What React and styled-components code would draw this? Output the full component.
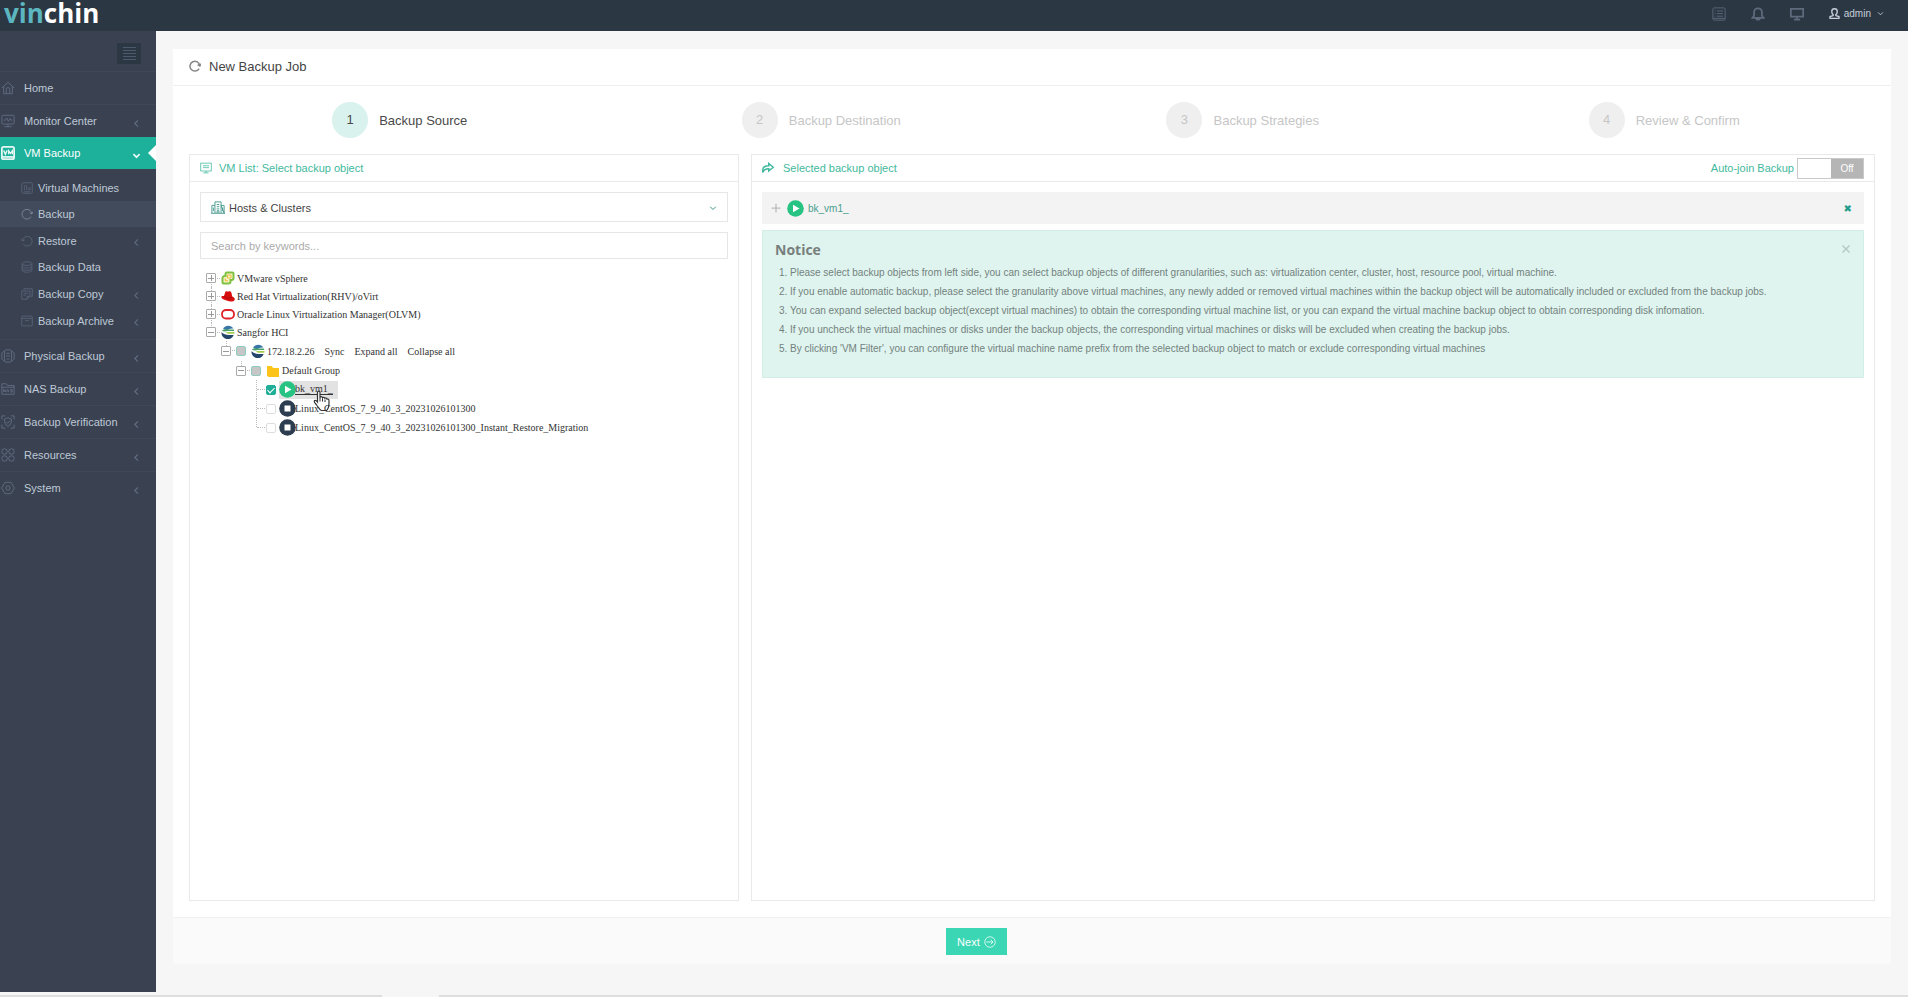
import React, { useState } from 'react';
import styled, { createGlobalStyle } from 'styled-components';

const icons = {
  home: <path d='M1 8 8 1.5 15 8M3 6.5V14.5H13V6.5M6 14V9.5a2 2 0 0 1 4 0V14' />,
  monitor: (
    <>
      <rect x='1' y='1.5' width='14' height='10' rx='1.5' />
      <path d='M3 7h2l1.5-2.5L8.500 8.500 10.500 5 11.500 7H13M8 11.500V14.500M4 14.500h8' />
    </>
  ),
  vm: (
    <>
      <rect x='1' y='1' width='14' height='14' rx='2' />
      <path d='M1 12.500h14' />
      <path d='M3 5 5 9.500 7 5M8.700 9.500V5.500L10.800 8.500 13 5.500V9.500' strokeWidth='1.500' />
    </>
  ),
  machines: (
    <>
      <rect x='1' y='1' width='14' height='14' rx='1' />
      <path d='M4.500 4v7M7.500 4v7M10.500 7v4M12 7v4M4 13h8' />
    </>
  ),
  refresh: <path d='M13.500 11.500A6.500 6.500 0 1 1 14.300 7.500M11.500 6.500l3 1.500 1.200-3' />,
  restore: <path d='M3 12A6.500 6.500 0 1 0 2 7M.5 5l1.500 3 3-1.500' />,
  data: (
    <>
      <ellipse cx='8' cy='3.500' rx='6.500' ry='2.500' />
      <path d='M1.500 3.500v3.500c0 3.300 13 3.300 13 0V3.500M1.500 7v3c0 3.300 13 3.300 13 0V7M1.500 10v2.500c0 3.300 13 3.300 13 0V10' />
    </>
  ),
  copy: (
    <>
      <path d='M4 3V1h11v10h-2' />
      <path d='M1 4h11v7l-4 4H1zM8 15v-4h4M3.500 7h6M3.500 9.500h3' />
    </>
  ),
  archive: (
    <>
      <rect x='1' y='1.500' width='14' height='13' rx='1' />
      <path d='M1 4.500h14M5.500 7.500h5' />
    </>
  ),
  physical: (
    <>
      <rect x='4' y='1' width='8' height='14' rx='1.500' />
      <path d='M4 3H2.500L1 4.500v7L2.500 13H4M12 3h1.500L15 4.500v7L13.500 13H12M6 5h4M6 8h4M6.500 11.500h3' />
    </>
  ),
  nas: (
    <>
      <path d='M1 14V2h5l1.500 2H15v10zM1 6h14' />
      <path d='M3 11.500V8.500l2 3v-3M6.500 11.500 7.800 8.500 9 11.500M13 8.500h-2v1.500h2v1.500h-2' />
    </>
  ),
  verify: (
    <>
      <path d='M8 3c1.500 1 2.500 1.500 4 1.500 0 4-.5 6.500-4 8.500-3.500-2-4-4.500-4-8.500C5.500 4.500 6.500 4 8 3zM6 8l1.500 1.500L10.500 6.500' />
      <path d='M1 5V1h4M11 1h4v4M15 11v4h-4M5 15H1v-4' />
    </>
  ),
  resources: (
    <>
      <rect x='1' y='1' width='6' height='6' rx='2.500' />
      <rect x='9' y='1' width='6' height='6' rx='2.500' />
      <rect x='1' y='9' width='6' height='6' rx='2.500' />
      <rect x='9' y='9' width='6' height='6' rx='2.500' />
    </>
  ),
  system: (
    <>
      <path d='M4.500 1.500h7L15.300 8l-3.800 6.500h-7L.7 8z' />
      <circle cx='8' cy='8' r='2.500' />
    </>
  ),
  left: <path d='M10.500 2.500 5 8l5.500 5.500' />,
  down: <path d='M2.500 5.500 8 11l5.500-5.500' />,
  list: (
    <>
      <rect x='1' y='1' width='14' height='14' rx='1.500' />
      <path d='M5.500 4.500h7M5.500 7.500h7M5.500 10.500h7M3 4.500h1M3 7.500h1M3 10.500h1M1 13h14' />
    </>
  ),
  bell: <path d='M1.500 12.500h13L12.500 10V6a4.500 4.500 0 0 0-9 0v4zM6 12.500a2 2 0 0 0 4 0' />,
  screen: <path d='M1 2h14v9H1zM8 11v3.500M4.500 14.500h7' />,
  user: <path d='M8 1c2.500 0 4 1.500 4 4 0 2-.8 3.500-2 4.500v1.500l4.500 1.500V15h-13v-2.500L6 11V9.500C4.800 8.500 4 7 4 5c0-2.500 1.500-4 4-4z' />,
  vmlist: (
    <>
      <rect x='1' y='1.500' width='14' height='10.500' />
      <path d='M4 5h8M4 7.500h8M8 12v2.500M4.500 14.500h7' />
    </>
  ),
  buildings: (
    <>
      <path d='M4.500 14V1h7v13M1 14V5h3.500M11.500 5H15v9zM0 14h16' />
      <path d='M6.500 4h3M6.500 6.500h3M6.500 9h3M7 14v-3h2v3M2.700 7.500v4M13.300 7.500v4' />
    </>
  ),
  share: <path d='M1 14V11c0-4 3-6 8-6V2l6 5-6 5V9C5 9 2.500 10 1 14z' />,
  plus: <path d='M8 1v14M1 8h14' />,
  arrow: (
    <>
      <circle cx='8' cy='8' r='7' />
      <path d='M3 8h9M9 5l3 3-3 3' />
    </>
  ),
};

const Icon = ({ name, size = 14, weight = 1 }) => (
  <Svg
    width={size}
    height={size}
    viewBox='0 0 16 16'
    fill='none'
    stroke='currentColor'
    strokeWidth={weight}
    aria-hidden='true'
  >
    {icons[name]}
  </Svg>
);

const VmwareIcon = () => (
  <Svg width='14' height='14' viewBox='0 0 14 14' aria-hidden='true'>
    <path
      d='M6 1.500h5.500a1 1 0 0 1 1 1V7a2 2 0 0 1-2 2H9.500v1.500a2 2 0 0 1-2 2H2.500a1 1 0 0 1-1-1V7a2 2 0 0 1 2-2H4.500V3a1.500 1.500 0 0 1 1.500-1.500z'
      fill='#fbf3c4'
      stroke='#7cc242'
      strokeWidth='2'
    />
    <path d='M6.500 4h3.500v3H6.500zM4.200 7.200v2.600h2.800' fill='none' stroke='#e3b93c' />
  </Svg>
);

const RedHatIcon = () => (
  <Svg width='14' height='14' viewBox='0 0 14 14' aria-hidden='true'>
    <path
      d='M3 7 4.500 2.500C5.500 1.500 6.500 3 7.500 2.500c1.500-.5 2.700.3 3 1.500l.7 3.500c2 .7 3.200 2.300 2.300 3.800-1.200 1.800-5 1.500-8 .3C2.500 10.500.3 9.500.3 8 .3 7.200 1.500 6.800 3 7z'
      fill='#d80d0d'
    />
    <path d='M3 7.200c1.500 1.800 6 2.800 8.200 1' fill='none' stroke='#a80a0a' strokeWidth='1' />
  </Svg>
);

const OracleIcon = () => (
  <Svg width='14' height='14' viewBox='0 0 14 14' aria-hidden='true'>
    <rect x='1' y='3' width='12' height='8.500' rx='4' fill='#fff' stroke='#e0222c' strokeWidth='1.800' />
  </Svg>
);

const SangforIcon = () => (
  <Svg width='14' height='14' viewBox='0 0 14 14' aria-hidden='true'>
    <path d='M2 3.500a6.300 6.300 0 0 1 10.500 0C9 3 7 4.500 6 5.500z' fill='#3a76a8' />
    <path d='M.8 5.500C3 3.800 5 4.200 7 4.500h5.800L13.300 6H6.500c-2 .8-4 .5-5.700-.5z' fill='#48a06d' />
    <path d='M5 7h8.500l-.2 1.800H8C6.500 8.800 5.500 8 5 7z' fill='#a4cf4b' />
    <path d='M.5 7.200C2.500 9 5 10 7.500 10h5.200A6.300 6.300 0 0 1 .5 7.200z' fill='#26456d' />
  </Svg>
);

const FolderIcon = () => (
  <Svg width='14' height='14' viewBox='0 0 14 14' aria-hidden='true'>
    <path d='M1 2h4.500L7.300 4H13v9H2.500L1 11.500z' fill='#fcc419' />
  </Svg>
);

const PlayIcon = () => (
  <Svg width='17' height='17' viewBox='0 0 17 17' aria-hidden='true'>
    <circle cx='8.500' cy='8.500' r='8.300' fill='#27c383' />
    <path d='M6 4.800v7.400l6.500-3.700z' fill='#fff' />
  </Svg>
);

const StopIcon = () => (
  <Svg width='17' height='17' viewBox='0 0 17 17' aria-hidden='true'>
    <circle cx='8.500' cy='8.500' r='8.300' fill='#2b3d4f' />
    <rect x='5.500' y='5.500' width='6' height='6' fill='#fff' />
  </Svg>
);

const HandCursor = () => (
  <Hand width='17' height='22' viewBox='0 0 17 22' aria-hidden='true'>
    <path
      d='M5 1.500c.8-.7 2-.2 2 1V8l.3-1c1-.7 2-.2 2.200.8.800-.8 2-.5 2.400.5.800-.6 2-.2 2.200.8.900-.3 1.900.3 1.900 1.500 0 2.500.2 5-.8 7.400-.4 1-.7 2-1.700 2.500H8.500C6.500 20 5.500 17.500 4 15.500 3 14 1 12.500 1.200 11.200c.5-1.200 2-.8 2.800.2l.5.6V2.500c0-.4.200-.8.500-1z'
      fill='#fff'
      stroke='#333'
      strokeWidth='1.200'
    />
    <path d='M7 8v3.500M9.500 8.500v3M12 9.500v2.500' stroke='#333' fill='none' />
  </Hand>
);

const menuTop = [
  { label: 'Home', icon: 'home' },
  { label: 'Monitor Center', icon: 'monitor', more: true },
];

const menuSub = [
  { label: 'Virtual Machines', icon: 'machines' },
  { label: 'Backup', icon: 'refresh', current: true },
  { label: 'Restore', icon: 'restore', more: true },
  { label: 'Backup Data', icon: 'data' },
  { label: 'Backup Copy', icon: 'copy', more: true },
  { label: 'Backup Archive', icon: 'archive', more: true },
];

const menuBottom = [
  { label: 'Physical Backup', icon: 'physical', more: true },
  { label: 'NAS Backup', icon: 'nas', more: true },
  { label: 'Backup Verification', icon: 'verify', more: true },
  { label: 'Resources', icon: 'resources', more: true },
  { label: 'System', icon: 'system', more: true },
];

const steps = ['Backup Source', 'Backup Destination', 'Backup Strategies', 'Review & Confirm'];

const platforms = [
  { label: 'VMware vSphere', icon: <VmwareIcon /> },
  { label: 'Red Hat Virtualization(RHV)/oVirt', icon: <RedHatIcon /> },
  { label: 'Oracle Linux Virtualization Manager(OLVM)', icon: <OracleIcon /> },
];

const stoppedVms = [
  'Linux_CentOS_7_9_40_3_20231026101300',
  'Linux_CentOS_7_9_40_3_20231026101300_Instant_Restore_Migration',
];

const notices = [
  'Please select backup objects from left side, you can select backup objects of different granularities, such as: virtualization center, cluster, host, resource pool, virtual machine.',
  'If you enable automatic backup, please select the granularity above virtual machines, any newly added or removed virtual machines within the backup object will be automatically included or excluded from the backup jobs.',
  'You can expand selected backup object(except virtual machines) to obtain the corresponding virtual machine list, or you can expand the virtual machine backup object to obtain corresponding disk infomation.',
  'If you uncheck the virtual machines or disks under the backup objects, the corresponding virtual machines or disks will be excluded when creating the backup jobs.',
  "By clicking 'VM Filter', you can configure the virtual machine name prefix from the selected backup object to match or exclude corresponding virtual machines",
];

const MenuItems = ({ items }) =>
  items.map(({ label, icon, more }) => (
    <MenuItem key={label}>
      <MenuLink href='#'>
        <Icon name={icon} />
        <MenuText>{label}</MenuText>
        {more && <Chevron><Icon name='left' size={9} weight={2} /></Chevron>}
      </MenuLink>
    </MenuItem>
  ));

const Sidebar = () => (
  <StyledSidebar>
    <TogglerRow>
      <Toggler type='button' aria-label='Toggle menu'>
        <ToggleBar />
        <ToggleBar />
        <ToggleBar />
        <ToggleBar />
        <ToggleBar />
      </Toggler>
    </TogglerRow>
    <ul>
      <MenuItems items={menuTop} />
      <li>
        <ActiveLink href='#'>
          <Icon name='vm' weight={2} />
          <MenuText>VM Backup</MenuText>
          <Chevron><Icon name='down' size={9} weight={3} /></Chevron>
        </ActiveLink>
        <SubMenu>
          {menuSub.map(({ label, icon, more, current }) => (
            <li key={label}>
              <SubLink href='#' $more={more} $current={current}>
                <Icon name={icon} size={12} />
                <MenuText>{label}</MenuText>
                {more && <Chevron><Icon name='left' size={9} weight={2} /></Chevron>}
              </SubLink>
            </li>
          ))}
        </SubMenu>
      </li>
      <MenuItems items={menuBottom} />
    </ul>
  </StyledSidebar>
);

const Check = ({ label, partial, ...rest }) => (
  <CheckBox
    type='checkbox'
    aria-label={label}
    ref={(node) => {
      if (node) node.indeterminate = Boolean(partial);
    }}
    {...rest}
  />
);

const Tree = () => {
  const [checked, setChecked] = useState(true);

  return (
    <TreeRoot>
      {platforms.map(({ label, icon }) => (
        <Node key={label}>
          <Row>
            <Expander type='button' aria-label={`Expand ${label}`} $closed />
            {icon}
            <NodeText>{label}</NodeText>
          </Row>
        </Node>
      ))}
      <Node>
        <Row>
          <Expander type='button' aria-label='Collapse Sangfor HCI' />
          <SangforIcon />
          <NodeText>Sangfor HCI</NodeText>
        </Row>
        <Branch>
          <Node>
            <Row $height={20}>
              <Expander type='button' aria-label='Collapse 172.18.2.26' />
              <Check label='172.18.2.26' partial />
              <SangforIcon />
              <NodeText>172.18.2.26</NodeText>
              <RowActions>
                <RowAction type='button'>Sync</RowAction>
                <RowAction type='button'>Expand all</RowAction>
                <RowAction type='button'>Collapse all</RowAction>
              </RowActions>
            </Row>
            <Branch>
              <Node>
                <Row $height={19}>
                  <Expander type='button' aria-label='Collapse Default Group' />
                  <Check label='Default Group' partial />
                  <FolderIcon />
                  <NodeText>Default Group</NodeText>
                </Row>
                <Branch>
                  <Node>
                    <Row $height={19}>
                      <Spacer />
                      <Check label='bk_vm1_' checked={checked} onChange={() => setChecked(!checked)} />
                      <Highlight>
                        <PlayIcon />
                        <Underlined>bk_vm1_</Underlined>
                        <HandCursor />
                      </Highlight>
                    </Row>
                  </Node>
                  {stoppedVms.map((name) => (
                    <Node key={name}>
                      <Row $height={19}>
                        <Spacer />
                        <Check label={name} />
                        <Machine>
                          <StopIcon />
                          <span>{name}</span>
                        </Machine>
                      </Row>
                    </Node>
                  ))}
                </Branch>
              </Node>
            </Branch>
          </Node>
        </Branch>
      </Node>
    </TreeRoot>
  );
};

const SourcePanel = () => (
  <Panel>
    <PanelHeader>
      <Icon name='vmlist' size={12} />
      <PanelTitle>VM List: Select backup object</PanelTitle>
    </PanelHeader>
    <PanelBody>
      <SelectBox>
        <Icon name='buildings' />
        <Select aria-label='View'>
          <option>Hosts &amp; Clusters</option>
        </Select>
        <Icon name='down' size={8} weight={2} />
      </SelectBox>
      <Search type='text' aria-label='Search by keywords' placeholder='Search by keywords...' />
      <Tree />
    </PanelBody>
  </Panel>
);

const SelectedPanel = () => (
  <Panel>
    <PanelHeader>
      <Icon name='share' size={12} weight={2} />
      <PanelTitle $wide>Selected backup object</PanelTitle>
      <SwitchLabel htmlFor='auto-join'>Auto-join Backup</SwitchLabel>
      <Switch>
        <SwitchInput id='auto-join' type='checkbox' role='switch' />
        <SwitchState>Off</SwitchState>
      </Switch>
    </PanelHeader>
    <PanelBody>
      <Selected>
        <PlusButton type='button' aria-label='Expand bk_vm1_'>
          <Icon name='plus' size={10} weight={2} />
        </PlusButton>
        <PlayIcon />
        <SelectedName>bk_vm1_</SelectedName>
        <RemoveButton type='button' aria-label='Remove bk_vm1_'>
          ✖
        </RemoveButton>
      </Selected>
      <Notice>
        <NoticeHead>
          <NoticeTitle>Notice</NoticeTitle>
          <CloseButton type='button' aria-label='Close notice'>
            <Svg width='8' height='8' viewBox='0 0 8 8' stroke='currentColor' strokeWidth='1.300'>
              <path d='M.5.5l7 7M7.500.5l-7 7' />
            </Svg>
          </CloseButton>
        </NoticeHead>
        <NoticeList>
          {notices.map((text) => (
            <li key={text}>{text}</li>
          ))}
        </NoticeList>
      </Notice>
    </PanelBody>
  </Panel>
);

const App = () => (
  <>
    <GlobalStyle />
    <Page>
      <TopBar>
        <Logo href='#'>
          <LogoAccent>vin</LogoAccent>chin
        </Logo>
        <TopActions>
          <TopButton type='button' aria-label='Tasks'><Icon name='list' /></TopButton>
          <TopButton type='button' aria-label='Alerts'><Icon name='bell' weight={2} /></TopButton>
          <TopButton type='button' aria-label='Screen'><Icon name='screen' weight={2} /></TopButton>
          <UserButton type='button'>
            <Icon name='user' size={11} weight={2} />
            admin
            <UserArrow><Icon name='down' size={7} weight={2} /></UserArrow>
          </UserButton>
        </TopActions>
      </TopBar>
      <Columns>
        <Sidebar />
        <Main>
          <Card>
            <CardHeader>
              <Icon name='refresh' size={12} weight={2} />
              <CardTitle>New Backup Job</CardTitle>
            </CardHeader>
            <CardBody>
              <Steps>
                {steps.map((label, i) => (
                  <Step key={label} $active={i === 0}>
                    <StepNumber $active={i === 0}>{i + 1}</StepNumber>
                    {label}
                  </Step>
                ))}
              </Steps>
              <Panels>
                <SourcePanel />
                <SelectedPanel />
              </Panels>
            </CardBody>
            <CardFooter>
              <NextButton type='button'>
                Next <Icon name='arrow' size={12} />
              </NextButton>
            </CardFooter>
          </Card>
        </Main>
      </Columns>
      <BottomStrip>
        <StripStart />
        <StripEnd />
      </BottomStrip>
    </Page>
  </>
);

export default App;

const GlobalStyle = createGlobalStyle`
  * {
    box-sizing: border-box;
  }
  body {
    margin: 0;
    background: #f6f6f6;
    color: #444;
    font-family: 'Liberation Sans', Arial, sans-serif;
    font-size: 11px;
  }
  ul, ol {
    list-style: none;
    margin: 0;
    padding: 0;
  }
  a {
    text-decoration: none;
  }
  button, input, select {
    font-family: inherit;
    margin: 0;
    padding: 0;
    border: none;
    background: none;
  }
  button {
    cursor: pointer;
  }
`;

const Svg = styled.svg`
  display: block;
  flex: none;
`;

const Page = styled.div`
  display: flex;
  flex-direction: column;
  min-height: 100vh;
`;

const TopBar = styled.header`
  display: flex;
  justify-content: space-between;
  height: 31px;
  padding: 0 24px 0 4px;
  background: #2c3744;
`;

const Logo = styled.a`
  color: #fff;
  font-family: 'Open Sans', sans-serif;
  font-size: 26px;
  font-weight: 700;
  line-height: 26px;
`;

const LogoAccent = styled.span`
  color: #5cb6bf;
`;

const TopActions = styled.div`
  display: flex;
  align-items: center;
  gap: 25px;
  height: 27px;
`;

const TopButton = styled.button`
  color: #5d6b7c;
`;

const UserButton = styled.button`
  display: flex;
  align-items: center;
  gap: 4px;
  color: #c6cfda;
  font-size: 10px;
`;

const UserArrow = styled.span`
  margin-left: 2px;
`;

const Columns = styled.div`
  display: flex;
  flex: 1;
`;

const StyledSidebar = styled.nav`
  flex: 0 0 156px;
  background: #3a4252;
`;

const TogglerRow = styled.div`
  display: flex;
  justify-content: flex-end;
  padding: 12px 15px 7px;
`;

const Toggler = styled.button`
  display: flex;
  flex-direction: column;
  justify-content: center;
  align-items: center;
  gap: 2px;
  width: 24px;
  height: 21px;
  background: #2c3744;
`;

const ToggleBar = styled.span`
  width: 13px;
  height: 1px;
  background: #4d5a6c;
`;

const MenuItem = styled.li`
  border-top: 1px solid #3f4858;
`;

const MenuLink = styled.a`
  display: flex;
  align-items: center;
  gap: 9px;
  height: 32px;
  padding: 0 15px 0 1px;
  color: #616f84;
`;

const MenuText = styled.span`
  flex: 1;
  color: #bfc9d6;
  font-size: 11px;
`;

const Chevron = styled.span`
  padding-top: 4px;
`;

const ActiveLink = styled(MenuLink)`
  position: relative;
  background: #1db09a;
  color: #e6f7f4;
  ${MenuText} {
    color: #fff;
  }
  &::after {
    content: '';
    position: absolute;
    right: 0;
    top: 8px;
    border: 8px solid transparent;
    border-left-width: 0;
    border-right-color: #fff;
  }
`;

const SubMenu = styled.ul`
  padding: 6px 0 5px;
`;

const SubLink = styled.a`
  display: flex;
  align-items: center;
  gap: 5px;
  height: ${({ $more }) => ($more ? '27px' : '26px')};
  padding: 0 15px 0 21px;
  background: ${({ $current }) => ($current ? '#414b5b' : 'transparent')};
  color: ${({ $current }) => ($current ? '#8592a5' : '#5c6a7e')};
`;

const Main = styled.main`
  display: flex;
  flex: 1;
  min-width: 0;
  padding: 18px 17px 28px;
`;

const Card = styled.section`
  display: flex;
  flex: 1;
  flex-direction: column;
  min-width: 0;
  background: #fff;
`;

const CardHeader = styled.header`
  display: flex;
  align-items: center;
  gap: 8px;
  height: 37px;
  padding: 0 16px 2px;
  border-bottom: 1px solid #efefef;
  color: #888;
`;

const CardTitle = styled.h1`
  margin: 0;
  color: #444;
  font-size: 13px;
  font-weight: 400;
`;

const CardBody = styled.div`
  display: flex;
  flex: 1;
  flex-direction: column;
  padding: 16px;
`;

const Steps = styled.ol`
  display: grid;
  grid-template-columns: repeat(4, 1fr);
`;

const Step = styled.li`
  display: flex;
  justify-content: center;
  align-items: center;
  gap: 11px;
  color: ${({ $active }) => ($active ? '#4a4a4a' : '#c6c6c6')};
  font-size: 13px;
`;

const StepNumber = styled.span`
  width: 36px;
  border-radius: 50%;
  background: ${({ $active }) => ($active ? '#d9f2ed' : '#efefef')};
  line-height: 36px;
  text-align: center;
`;

const Panels = styled.div`
  display: grid;
  flex: 1;
  grid-template-columns: 550fr 1124fr;
  gap: 12px;
  margin-top: 16px;
`;

const Panel = styled.section`
  min-width: 0;
  border: 1px solid #e9e9e9;
`;

const PanelHeader = styled.header`
  display: flex;
  align-items: center;
  height: 27px;
  padding: 0 10px;
  border-bottom: 1px solid #e9e9e9;
  color: #3fb99d;
`;

const PanelTitle = styled.h2`
  flex: 1;
  margin: 0 0 0 ${({ $wide }) => ($wide ? '9px' : '7px')};
  font-size: 11px;
  font-weight: 400;
`;

const PanelBody = styled.div`
  padding: 10px;
`;

const SwitchLabel = styled.label`
  margin-right: 3px;
`;

const Switch = styled.span`
  display: flex;
  height: 21px;
  border: 1px solid #c9c9c9;
`;

const SwitchInput = styled.input`
  appearance: none;
  width: 33px;
  background: #fff;
`;

const SwitchState = styled.span`
  width: 32px;
  background: #b5b5b5;
  color: #fff;
  font-size: 10px;
  line-height: 19px;
  text-align: center;
`;

const SelectBox = styled.div`
  display: flex;
  align-items: center;
  gap: 4px;
  height: 30px;
  padding: 2px 10px 0;
  border: 1px solid #e6e6e6;
  color: #3d9488;
`;

const Select = styled.select`
  appearance: none;
  flex: 1;
  color: #444;
  font-size: 11px;
`;

const Search = styled.input`
  display: block;
  width: 100%;
  height: 27px;
  margin-top: 10px;
  padding: 0 10px;
  border: 1px solid #e6e6e6;
  font-size: 11px;
  &::placeholder {
    color: #aaa;
  }
`;

const TreeRoot = styled.ul`
  margin-top: 10px;
  padding-left: 6px;
  color: #333;
  font-family: 'Liberation Serif', 'Times New Roman', serif;
  font-size: 10px;
`;

const Branch = styled.ul`
  padding-left: 15px;
`;

const Node = styled.li`
  position: relative;
  &::before {
    content: '';
    position: absolute;
    top: 0;
    bottom: 0;
    left: 5px;
    border-left: 1px dotted #bbb;
  }
  &:last-child::before {
    bottom: auto;
    height: 9px;
  }
  ${TreeRoot} > &:first-child::before {
    top: 9px;
  }
`;

const Row = styled.div`
  display: flex;
  position: relative;
  align-items: center;
  gap: 5px;
  height: ${({ $height = 18 }) => $height}px;
  white-space: nowrap;
  &::before {
    content: '';
    position: absolute;
    top: 9px;
    left: 6px;
    width: 8px;
    border-top: 1px dotted #bbb;
  }
`;

const Expander = styled.button`
  position: relative;
  flex: none;
  width: 10px;
  height: 10px;
  border: 1px solid #aaa;
  border-radius: 1px;
  background:
    linear-gradient(#999, #999) center / 6px 1px no-repeat,
    linear-gradient(#999, #999) center / ${({ $closed }) => ($closed ? '1px 6px' : '0 0')} no-repeat,
    #fff;
`;

const Spacer = styled.span`
  width: 10px;
`;

const NodeText = styled.span`
  margin-left: -3px;
`;

const RowActions = styled.span`
  display: flex;
  gap: 10px;
  margin-left: 5px;
`;

const RowAction = styled.button`
  color: inherit;
  font-size: 10px;
`;

const CheckBox = styled.input`
  appearance: none;
  display: flex;
  justify-content: center;
  flex: none;
  width: 10px;
  height: 10px;
  border: 1px solid #ddd;
  border-radius: 2px;
  background: #fff;
  &:indeterminate {
    border-color: #8fccc0;
    background: #c6c6c6;
  }
  &:checked {
    border-color: #1fae98;
    background: #1fae98;
  }
  &:checked::after {
    content: '';
    width: 3px;
    height: 6px;
    border: solid #fff;
    border-width: 0 1px 1px 0;
    transform: rotate(45deg);
  }
`;

const Machine = styled.span`
  display: flex;
  position: relative;
  align-items: center;
  margin-left: -2px;
  span {
    margin-left: -1px;
  }
`;

const Highlight = styled(Machine)`
  height: 18px;
  padding-right: 5px;
  background: #e2e2e2;
`;

const Underlined = styled.span`
  border-bottom: 1px solid #333;
  line-height: 10px;
`;

const Hand = styled.svg`
  position: absolute;
  top: 9px;
  left: 34px;
`;

const Selected = styled.div`
  display: flex;
  align-items: center;
  height: 32px;
  padding: 0 12px 0 9px;
  background: #f3f3f3;
`;

const PlusButton = styled.button`
  margin-right: 6px;
  color: #bbb;
`;

const SelectedName = styled.span`
  flex: 1;
  margin-left: 4px;
  color: #4aa08f;
  font-size: 10px;
`;

const RemoveButton = styled.button`
  color: #1f9c8a;
  font-family: 'DejaVu Sans', sans-serif;
  font-size: 10px;
`;

const Notice = styled.div`
  margin-top: 6px;
  padding: 8px 13px 19px 12px;
  border: 1px solid #d2eee6;
  background: #dff4ee;
  color: #73827e;
`;

const NoticeHead = styled.div`
  display: flex;
  justify-content: space-between;
  align-items: center;
  height: 20px;
`;

const NoticeTitle = styled.h3`
  margin: 0;
  color: #777f7d;
  font-family: 'Open Sans', sans-serif;
  font-size: 14px;
  font-weight: 700;
`;

const CloseButton = styled.button`
  color: #b3c6c1;
`;

const NoticeList = styled.ol`
  margin-top: 4px;
  padding-left: 15px;
  list-style: decimal;
  font-size: 10px;
  line-height: 19px;
`;

const CardFooter = styled.footer`
  height: 47px;
  padding-top: 10px;
  border-top: 1px solid #f1f1f1;
  background: #fafafa;
`;

const NextButton = styled.button`
  display: flex;
  align-items: center;
  gap: 4px;
  height: 27px;
  margin-left: 45%;
  padding: 0 11px;
  background: #3bd6b4;
  color: #fff;
  font-size: 11px;
`;

const BottomStrip = styled.div`
  display: flex;
  justify-content: space-between;
  align-items: flex-end;
  height: 5px;
`;

const StripStart = styled.span`
  width: 20%;
  height: 2px;
  background: #dedede;
`;

const StripEnd = styled(StripStart)`
  width: 77%;
`;
